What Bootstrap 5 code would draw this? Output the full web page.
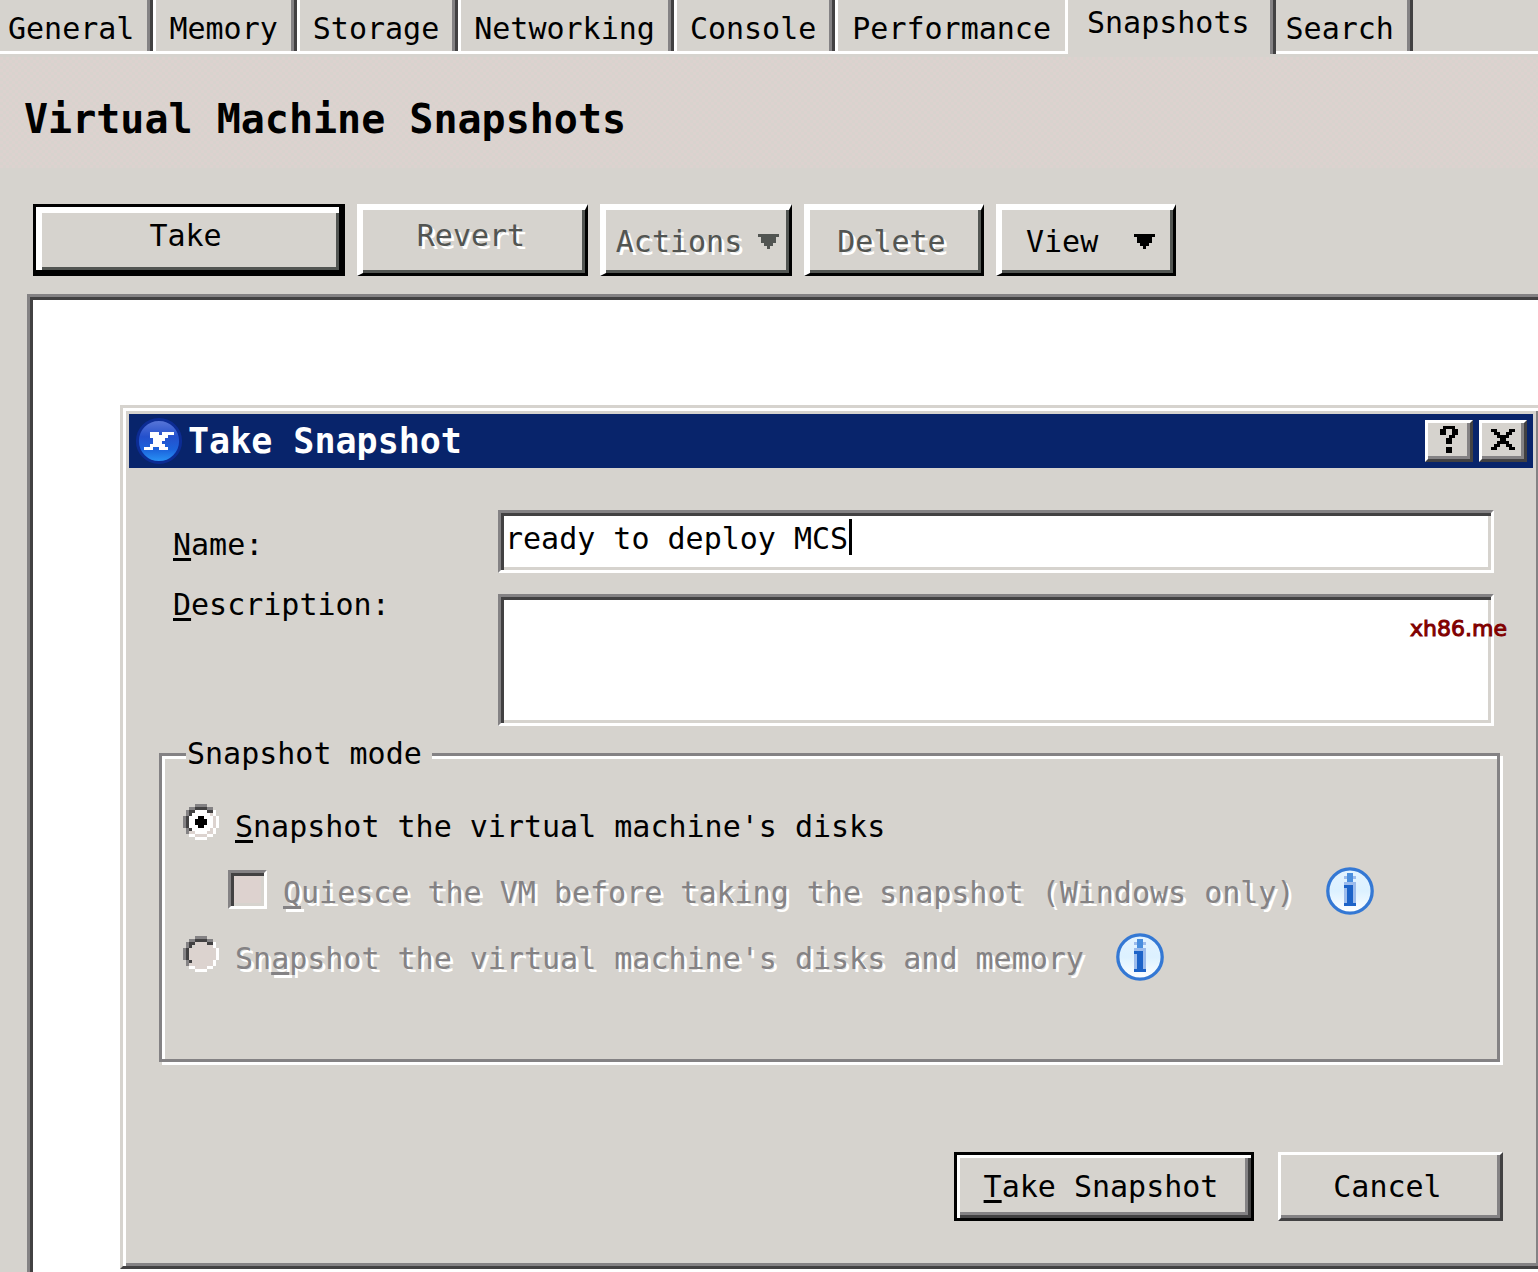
<!DOCTYPE html>
<html lang="en">
<head>
<meta charset="utf-8">
<meta name="viewport" content="width=device-width, initial-scale=1">
<title>Virtual Machine Snapshots</title>
<link href="https://cdn.jsdelivr.net/npm/bootstrap@5.3.0/dist/css/bootstrap.min.css" rel="stylesheet">
<style>
:root{--face:#d6d3ce;--mid:#848284;--dark:#424142;--soft:#525552;--blush:#ddd2cf}
body{font-family:"DejaVu Sans Mono","Liberation Mono",monospace;font-size:30px;line-height:36px;color:#000;background:var(--face);min-height:100vh;overflow-x:hidden}
button,input,textarea{font:inherit;color:inherit;border-radius:0}
u{text-decoration-thickness:3px;text-underline-offset:3px;text-decoration-skip-ink:none}
/* tab strip */
.tabstrip{height:54px;border-bottom:3px solid #fff;list-style:none}
.tabstrip a{display:block;height:51px;padding:11px 16px 0 13px;color:#000;text-decoration:none;white-space:nowrap;border-left:3px solid #fff;border-right:3px solid var(--dark);box-shadow:inset -3px 0 var(--mid)}
.tabstrip li:first-child a{border-left:0;padding-left:8px}
.tabstrip .before-current{border-right:0;box-shadow:none;padding-right:14px;padding-left:14px}
.tabstrip .current{height:54px;padding:5px 23px 0 19px;background:var(--face);position:relative}
.tabstrip .after-current{border-left:0;padding-left:10px}
.page-head{padding:41px 24px 61px;background:repeating-conic-gradient(var(--blush) 0 25%,#d8d3ce 0 50%) 0 3px/6px 6px;border-top:3px solid var(--face);padding-top:38px;padding-bottom:25px;margin-bottom:36px}
.page-head h1{font-size:40px;line-height:48px;font-weight:700}
/* toolbar */
.toolbar{gap:12px;padding:0 33px 18px}
.tool{height:72px;background:var(--face);padding:0 0 2px;white-space:nowrap;border:solid;border-width:6px 3px 3px 6px;border-color:#fff #000 #000 #fff;box-shadow:inset -3px -3px var(--soft)}
.tool:disabled{color:var(--soft);text-shadow:3px 3px #fff}
.tool.primary-tool{border-width:3px 6px 6px 3px;border-color:#000;box-shadow:inset 3px 6px #fff,inset 3px 6px #fff,inset 6px 6px #fff,inset -3px -3px var(--soft);width:312px;padding:0 8px 6px 4px}
.w-revert{width:231px;padding:0 6px 12px 0}
.w-actions{width:192px}
.w-std{width:180px;padding:0 8px 0 0}
.w-view{width:180px;padding:0 18px 0 24px}
.w-actions,.w-view{padding-bottom:0}
/* canvas and dialog */
.canvas{margin-left:27px;border:3px solid var(--mid);border-width:3px 0 0 3px;box-shadow:inset 3px 3px var(--dark);background:#fff;padding:108px 0 3px 90px}
.dlg{background:var(--face);border:3px solid var(--face);border-right:0;border-bottom-color:var(--dark);box-shadow:inset 3px 3px #fff,inset -2px -3px var(--mid);padding:6px 5px 3px 6px}
.dlg-title{height:54px;background:#08246b;color:#fff;padding:0 6px}
.dlg-title h2{font-size:35px;line-height:42px;font-weight:700;margin-left:5px}
.cap-group{gap:6px}
.cap-btn{width:48px;height:42px;padding:0;border:3px solid;border-color:#fff var(--dark) var(--dark) #fff;box-shadow:inset -3px -3px var(--mid);background:var(--face)}
.cap-btn svg{display:block}
.dlg-form{padding:42px 39px 0 44px}
.label-col{width:325px;padding-top:17px;gap:24px}
.field-col{gap:21px}
.field{display:block;width:100%;border:3px solid;border-color:var(--mid) #fff #fff var(--mid);box-shadow:inset 3px 3px var(--dark),inset -3px -3px var(--face);background:#fff;outline:0;resize:none;padding:0 4px}
.field-name{height:63px;padding-bottom:6px}
.field-desc{height:132px}
.caret{position:absolute;left:351px;top:9px;width:3px;height:36px;background:#000}
.stamp{position:absolute;right:-13px;top:21px;font:22px/28px "DejaVu Sans",sans-serif;color:#800000;-webkit-text-stroke:1px #800000}
.modes{margin:10px 33px 0 30px;border:3px solid var(--mid);box-shadow:3px 3px #fff,inset 3px 3px #fff;padding:0 21px 78px}
.modes legend{font-size:30px;line-height:36px;background:var(--face);margin:0 0 29px 3px;padding:0 10px 0 1px}
.mode{height:48px;margin-bottom:18px;white-space:nowrap}
.mode:last-child{margin-bottom:0}
.mode label{padding:8px 0 0;margin:0 32px 0 16px}
.off{color:var(--mid);text-shadow:3px 3px #fff}
.mode input{appearance:none;flex:none;margin:3px 0 0;opacity:1}
.mode input[type=radio]{width:36px;height:36px;background:url("data:image/svg+xml,%3Csvg xmlns='http://www.w3.org/2000/svg' viewBox='0 0 12 12' shape-rendering='crispEdges'%3E%3Cpath fill='%23dcd3cf' d='M4 2h4v1h2v1h1v4h-1v2H8v1H4v-1H2V4h2z'/%3E%3Cpath fill='%23848284' d='M4 0h4v1h2v1H2V1h2zM1 2h1v2H1zM0 4h1v4H0zM1 8h1v2H1z'/%3E%3Cpath fill='%23424142' d='M4 1h4v1h2v1H8V2H4v1H3v1H2v4h1v1H2V8H1V4h1V2h2z'/%3E%3Cpath fill='%23fff' d='M10 2h1v2h-1zM11 4h1v4h-1zM10 8h1v2h-1zM2 10h2v1H2zM4 11h4v1H4zM8 10h2v1H8z'/%3E%3C/svg%3E")}
.mode input[type=radio]:checked{background-image:url("data:image/svg+xml,%3Csvg xmlns='http://www.w3.org/2000/svg' viewBox='0 0 12 12' shape-rendering='crispEdges'%3E%3Cpath fill='%23dcd3cf' d='M9 3h1v1h1v4h-1v2H8v1H4v-1H2V9h7z'/%3E%3Cpath fill='%23fff' d='M4 2h4v1h1v1h1v4H9v1H8v1H4V9H3V8H2V4h1V3h1z'/%3E%3Cpath fill='%23848284' d='M4 0h4v1h2v1H2V1h2zM1 2h1v2H1zM0 4h1v4H0zM1 8h1v2H1z'/%3E%3Cpath fill='%23424142' d='M4 1h4v1h2v1H8V2H4v1H3v1H2v4h1v1H2V8H1V4h1V2h2z'/%3E%3Cpath fill='%23fff' d='M10 2h1v2h-1zM11 4h1v4h-1zM10 8h1v2h-1zM2 10h2v1H2zM4 11h4v1H4zM8 10h2v1H8z'/%3E%3Cpath d='M5 4h2v1h1v2H7v1H5V7H4V5h1z'/%3E%3C/svg%3E")}
.mode input[type=checkbox]{width:39px;height:39px;margin-left:45px;background:var(--blush);border:3px solid;border-color:var(--mid) #fff #fff var(--mid);box-shadow:inset 3px 3px var(--dark),inset -3px -3px var(--face)}
.dlg-foot{gap:24px;padding:90px 30px 42px}
.dlg-btn{height:69px;width:225px;background:var(--face);border:3px solid;border-color:#fff var(--dark) var(--dark) #fff;box-shadow:inset -3px -3px var(--mid);padding:0 6px 0 0}
.dlg-btn.go{width:300px;border-color:#000;box-shadow:inset 3px 3px #fff,inset -3px -3px var(--dark),inset -6px -6px var(--mid)}
</style>
<script src="https://cdn.jsdelivr.net/npm/bootstrap@5.3.0/dist/js/bootstrap.bundle.min.js"></script>
</head>
<body class="d-flex flex-column">
<svg width="0" height="0" class="position-absolute" aria-hidden="true">
  <defs>
    <linearGradient id="glass" x1="0" y1="0" x2="0" y2="1"><stop offset="0" stop-color="#e4f3ff"/><stop offset=".5" stop-color="#dcf1ff"/><stop offset="1" stop-color="#fff"/></linearGradient>
    <linearGradient id="orb" x1="0" y1="0" x2="0" y2="1"><stop offset="0" stop-color="#5c78d8"/><stop offset=".4" stop-color="#2450cc"/><stop offset=".7" stop-color="#1c63dc"/><stop offset="1" stop-color="#2a98f8"/></linearGradient>
    <symbol id="info" viewBox="0 0 16 16">
      <circle cx="8" cy="8" r="7.4" fill="url(#glass)" stroke="#3478d4" stroke-width="1.1"/>
      <g shape-rendering="crispEdges"><path fill="#9cbcec" d="M6 3h4v1H6zM6 5h4v1H6zM6 7h1v5H6zM9 6h1v6H9z"/><path fill="#4a8ede" d="M7 2h2v3H7z"/><path fill="#1c63c8" d="M6 6h3v6h1v1H6v-1h1V7H6z"/></g>
    </symbol>
    <symbol id="drop" viewBox="0 0 7 5"><path fill="currentColor" shape-rendering="crispEdges" d="M0 0h7v1H6v2H5v1H4v1H3V4H2V3H1V1H0z"/></symbol>
  </defs>
</svg>
<nav>
  <ul class="tabstrip d-flex m-0 p-0">
    <li><a href="#">General</a></li>
    <li><a href="#">Memory</a></li>
    <li><a href="#">Storage</a></li>
    <li><a href="#">Networking</a></li>
    <li><a href="#">Console</a></li>
    <li><a href="#" class="before-current">Performance</a></li>
    <li><a href="#" class="current" aria-current="page">Snapshots</a></li>
    <li><a href="#" class="after-current">Search</a></li>
  </ul>
</nav>
<header class="page-head"><h1 class="m-0">Virtual Machine Snapshots</h1></header>
<div class="toolbar d-flex">
  <button type="button" class="tool primary-tool">Take</button>
  <button type="button" class="tool w-revert" disabled>Revert</button>
  <button type="button" class="tool w-actions d-flex align-items-center justify-content-center gap-3" disabled>Actions<svg width="21" height="15" aria-hidden="true"><use href="#drop"/></svg></button>
  <button type="button" class="tool w-std" disabled>Delete</button>
  <button type="button" class="tool w-view d-flex align-items-center justify-content-between">View<svg width="21" height="15" aria-hidden="true"><use href="#drop"/></svg></button>
</div>
<main class="canvas flex-grow-1">
  <section class="dlg" role="dialog" aria-labelledby="dlg-name">
    <div class="dlg-title d-flex align-items-center">
      <svg width="48" height="48" viewBox="0 0 16 16" aria-hidden="true"><circle cx="8" cy="8" r="7.2" fill="url(#orb)" stroke="#0c2c94"/><path fill="#fff" shape-rendering="crispEdges" d="M5 5h3v1h1V5h4v1h-2v1h-1v1H9v1h1v1h1v1H8v-1H6v1H3v-1h2V9h1V7H5z"/></svg>
      <h2 class="mb-0 me-auto" id="dlg-name">Take Snapshot</h2>
      <div class="cap-group d-flex">
        <button type="button" class="cap-btn" aria-label="Help"><svg width="42" height="36" viewBox="0 0 14 12" shape-rendering="crispEdges"><path d="M5 1h4v1h1v2H9v1H8v2H6V5h1V4h1V2H6v2H4V2h1zM6 8h2v2H6z"/></svg></button>
        <button type="button" class="cap-btn" aria-label="Close"><svg width="42" height="36" viewBox="0 0 14 12" shape-rendering="crispEdges"><path d="M3 2h2v1h1v1h2V3h1V2h2v1h-1v1H9v1H8v1h1v1h1v1h1v1H9V8H8V7H6v1H5v1H3V8h1V7h1V6h1V5H5V4H4V3H3z"/></svg></button>
      </div>
    </div>
    <form>
      <div class="dlg-form d-flex">
        <div class="label-col d-flex flex-column flex-shrink-0">
          <label for="snap-name"><u>N</u>ame:</label>
          <label for="snap-desc"><u>D</u>escription:</label>
        </div>
        <div class="field-col d-flex flex-column flex-grow-1">
          <div class="position-relative">
            <input class="field field-name" id="snap-name" type="text" value="ready to deploy MCS">
            <span class="caret" aria-hidden="true"></span>
          </div>
          <div class="position-relative">
            <textarea class="field field-desc" id="snap-desc"></textarea>
            <span class="stamp">xh86.me</span>
          </div>
        </div>
      </div>
      <fieldset class="modes">
        <legend class="float-none w-auto">Snapshot mode</legend>
        <div class="mode d-flex"><input type="radio" name="mode" id="m-disks" checked><label for="m-disks"><u>S</u>napshot the virtual machine's disks</label></div>
        <div class="mode d-flex"><input type="checkbox" id="m-quiesce" disabled><label class="off" for="m-quiesce"><u>Q</u>uiesce the VM before taking the snapshot (Windows only)</label><svg class="flex-shrink-0" width="48" height="48" role="img" aria-label="Information"><use href="#info"/></svg></div>
        <div class="mode d-flex"><input type="radio" name="mode" id="m-mem" disabled><label class="off" for="m-mem">Sn<u>a</u>pshot the virtual machine's disks and memory</label><svg class="flex-shrink-0" width="48" height="48" role="img" aria-label="Information"><use href="#info"/></svg></div>
      </fieldset>
      <div class="dlg-foot d-flex justify-content-end">
        <button type="button" class="dlg-btn go"><u>T</u>ake Snapshot</button>
        <button type="button" class="dlg-btn">Cancel</button>
      </div>
    </form>
  </section>
</main>
</body>
</html>
